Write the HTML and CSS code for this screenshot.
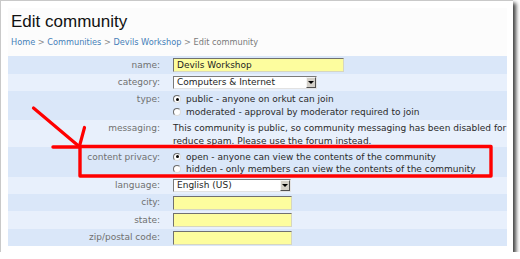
FILE: index.html
```html
<!DOCTYPE html>
<html>
<head>
<meta charset="utf-8">
<link rel="stylesheet" href="styles.css">
</head>
<body>
<div class="frame">
  <div class="page">
    <h1 class="title">Edit community</h1>
    <div class="crumbs"><a class="link">Home</a> &gt; <a class="link">Communities</a> &gt; <a class="link">Devils Workshop</a> &gt; <span class="cur">Edit community</span></div>
    <div class="form">
      <div class="row dark h18">
        <div class="label">name:</div>
        <div class="value"><div class="input w-name">Devils Workshop</div></div>
      </div>
      <div class="row light h17">
        <div class="label">category:</div>
        <div class="value"><div class="select w-cat"><span class="sel-text">Computers &amp; Internet</span><span class="arrow"></span></div></div>
      </div>
      <div class="row dark multi h29 pt2">
        <div class="label">type:</div>
        <div class="value">
          <div class="opt"><span class="radio on"></span>public - anyone on orkut can join</div>
          <div class="opt"><span class="radio"></span>moderated - approval by moderator required to join</div>
        </div>
      </div>
      <div class="row light multi h27 pt2">
        <div class="label">messaging:</div>
        <div class="value">
          <div class="line">This community is public, so community messaging has been disabled for</div>
          <div class="line">reduce spam. Please use the forum instead.</div>
        </div>
      </div>
      <div class="row dark multi h30 pt3">
        <div class="label">content privacy:</div>
        <div class="value">
          <div class="opt"><span class="radio on"></span>open - anyone can view the contents of the community</div>
          <div class="opt"><span class="radio"></span>hidden - only members can view the contents of the community</div>
        </div>
      </div>
      <div class="row light h17">
        <div class="label">language:</div>
        <div class="value"><div class="select w-lang"><span class="sel-text">English (US)</span><span class="arrow"></span></div></div>
      </div>
      <div class="row dark h17">
        <div class="label">city:</div>
        <div class="value"><div class="input w-small"></div></div>
      </div>
      <div class="row light h18">
        <div class="label">state:</div>
        <div class="value"><div class="input w-small"></div></div>
      </div>
      <div class="row dark h17">
        <div class="label">zip/postal code:</div>
        <div class="value"><div class="input w-small"></div></div>
      </div>
    </div>
  </div>
  <svg class="annot" width="520" height="259" viewBox="0 0 520 259">
    <g fill="none" stroke="#f00" stroke-linecap="round" stroke-linejoin="round">
      <rect x="80" y="146.5" width="411" height="29.5" stroke-width="3.4"/>
      <line x1="53" y1="147" x2="80" y2="147" stroke-width="3.4"/>
      <line x1="33.5" y1="108" x2="78" y2="145.5" stroke-width="3.2"/>
      <line x1="84.5" y1="127.5" x2="79.5" y2="146" stroke-width="3.2"/>
    </g>
  </svg>
</div>
</body>
</html>
```

FILE: styles.css
```css
html, body {
  margin: 0;
  padding: 0;
  background: #ffffff;
}

.frame {
  position: relative;
  box-sizing: border-box;
  width: 513px;
  height: 252px;
  border-top: 1px solid #c9c9c9;
  border-left: 1px solid #c9c9c9;
  padding: 7px 6px 6px 7px;
  background: #ffffff;
  box-shadow: 3px 3px 4px rgba(0, 0, 0, 0.75);
}

.page {
  height: 100%;
  background: #fcfcfc;
  padding-top: 4px;
  box-sizing: border-box;
  overflow: hidden;
}

.title {
  margin: 0;
  padding: 0 3px;
  font-family: "Liberation Sans", Arial, sans-serif;
  font-weight: normal;
  font-size: 17px;
  line-height: 20px;
  color: #111111;
}

.crumbs {
  margin-top: 5px;
  padding: 0 3px;
  font-family: "DejaVu Sans", Verdana, sans-serif;
  font-size: 8.2px;
  line-height: 10px;
  color: #8a8a8a;
  white-space: nowrap;
}

.link {
  color: #4680b8;
}

.cur {
  color: #7a7a7a;
}

.form {
  margin-top: 9px;
  font-family: "DejaVu Sans", Verdana, sans-serif;
  font-size: 9px;
  line-height: 12.5px;
}

.row {
  display: grid;
  grid-template-columns: 157px 1fr;
  align-items: center;
  box-sizing: border-box;
}

.row.multi {
  align-items: start;
}

.dark { background: #dae7f9; }
.light { background: #e8f0fc; }

.h17 { height: 17px; }
.h18 { height: 18px; }
.h27 { height: 27px; }
.h29 { height: 29px; }
.h30 { height: 30px; }
.pt2 { padding-top: 2px; }
.pt3 { padding-top: 3.5px; }

.label {
  text-align: right;
  padding-right: 5px;
  color: #707070;
  white-space: nowrap;
}

.value {
  padding-left: 8px;
  color: #2a2a2a;
  white-space: nowrap;
}

.input {
  box-sizing: border-box;
  height: 14px;
  background: #fdfd9e;
  border: 1px solid;
  border-color: #707070 #d6d6c0 #d6d6c0 #707070;
  padding-left: 3px;
  line-height: 12px;
  color: #1e1e1e;
}

.w-name { width: 171px; }
.w-small { width: 119px; }

.select {
  box-sizing: border-box;
  display: flex;
  align-items: center;
  justify-content: space-between;
  height: 13px;
  background: #ffffff;
  border: 1px solid;
  border-color: #7a7a7a #e2e2e2 #e2e2e2 #7a7a7a;
  padding-left: 3px;
  padding-right: 0;
}

.w-cat { width: 144px; }
.w-lang { width: 118px; }

.sel-text {
  line-height: 11px;
  color: #1e1e1e;
}

.arrow {
  position: relative;
  box-sizing: border-box;
  width: 10px;
  height: 11px;
  background: #d4d0c8;
  border: 1px solid;
  border-color: #f4f4f4 #505050 #505050 #f4f4f4;
}

.arrow::after {
  content: "";
  position: absolute;
  left: 1px;
  top: 3px;
  border-left: 3px solid transparent;
  border-right: 3px solid transparent;
  border-top: 3px solid #000000;
}

.opt {
  display: flex;
  align-items: center;
}

.radio {
  position: relative;
  box-sizing: border-box;
  width: 8px;
  height: 8px;
  border-radius: 50%;
  background: #ffffff;
  border: 1px solid;
  border-color: #6a6a6a #dcdcdc #dcdcdc #6a6a6a;
  margin-right: 5px;
  flex: none;
}

.radio.on::after {
  content: "";
  position: absolute;
  left: 1.5px;
  top: 1.5px;
  width: 3px;
  height: 3px;
  border-radius: 50%;
  background: #000000;
}

.line {
  white-space: nowrap;
}

.annot {
  position: absolute;
  left: -1px;
  top: -1px;
  pointer-events: none;
}
```
